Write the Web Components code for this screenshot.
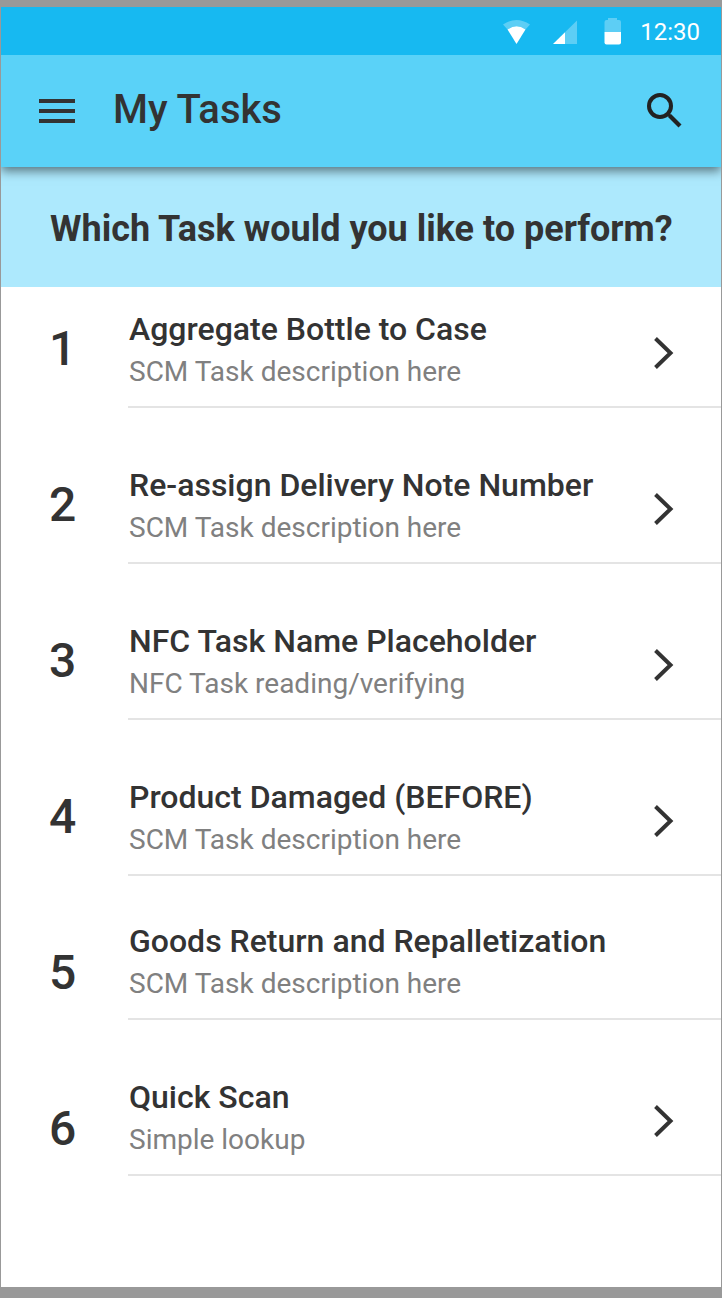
<!DOCTYPE html>
<html lang="en">
<head>
<meta charset="utf-8">
<meta name="viewport" content="width=device-width, initial-scale=1">
<title>My Tasks</title>
<style>
  body { margin: 0; background: #999; color: #333; font-family: Roboto, sans-serif; }
</style>
</head>
<body>
<task-app>
  <status-bar slot="top">12:30</status-bar>
  <app-bar slot="top">My Tasks</app-bar>
  <task-prompt>Which Task would you like to perform?</task-prompt>
  <task-list>
    <task-item number="1" arrow>Aggregate Bottle to Case<span slot="description">SCM Task description here</span></task-item>
    <task-item number="2" arrow>Re-assign Delivery Note Number<span slot="description">SCM Task description here</span></task-item>
    <task-item number="3" arrow>NFC Task Name Placeholder<span slot="description">NFC Task reading/verifying</span></task-item>
    <task-item number="4" arrow>Product Damaged (BEFORE)<span slot="description">SCM Task description here</span></task-item>
    <task-item number="5" low short>Goods Return and Repalletization<span slot="description">SCM Task description here</span></task-item>
    <task-item number="6" low arrow>Quick Scan<span slot="description">Simple lookup</span></task-item>
  </task-list>
</task-app>

<script>
const define = (name, html, setup) => {
  const template = document.createElement('template');
  template.innerHTML = html;
  customElements.define(name, class extends HTMLElement {
    constructor() {
      super();
      this.attachShadow({ mode: 'open' }).append(template.content.cloneNode(true));
    }
    connectedCallback() { if (setup) setup(this, this.shadowRoot); }
  });
};

define('task-app', `
  <style>
    :host { display: flex; flex-direction: column; box-sizing: border-box; min-height: 100vh; padding: 7px 1px 11px; }
    header { position: relative; box-shadow: 0 4px 10px rgba(0, 0, 0, .5); clip-path: inset(0 0 -20px 0); }
    main { flex: 1; background: #fff; }
  </style>
  <header><slot name="top"></slot></header>
  <main><slot></slot></main>`);

define('status-bar', `
  <style>
    :host { display: flex; align-items: center; justify-content: flex-end; box-sizing: border-box; height: 48px; padding: 2px 21px 0 0; background: #17b9f1; color: #fff; font-size: 24px; line-height: 28px; }
    svg { display: block; margin-right: 19px; }
  </style>
  <svg width="118" height="28" viewBox="0 -2 118 28" aria-hidden="true">
    <g fill="#fff" fill-opacity=".3">
      <path d="M0 4.500Q13.500 -4.500 27 4.500L22.500 9.500Q13.500 3 4.500 9.500Z"/>
      <path d="M62 12.200L74 0.500V24H62Z"/>
      <path d="M101.500 12V2Q101.500 0 103.500 0H105V-2H114V0H116Q118 0 118 2V12Z"/>
    </g>
    <g fill="#fff">
      <path d="M4.500 9.500Q13.500 3 22.500 9.500L13.500 24Z" />
      <path d="M50 24L62 12.200V24Z"/>
      <path d="M101.500 12H118V22.500Q118 24.500 116 24.500H103.500Q101.500 24.500 101.500 22.500Z"/>
    </g>
  </svg>
  <time><slot></slot></time>`);

define('app-bar', `
  <style>
    :host { display: flex; align-items: center; height: 112px; padding: 0 32px; background: #5ad2f8; }
    button { display: flex; align-items: center; justify-content: center; width: 48px; height: 48px; padding: 0; border: 0; background: none; color: #333; cursor: pointer; }
    svg { display: block; }
    h1 { flex: 1; margin: 0; padding: 0 0 2px 32px; font-size: 40px; line-height: 48px; font-weight: 500; }
  </style>
  <button type="button" aria-label="Menu">
    <svg width="36" height="24" viewBox="0 0 36 24" fill="currentColor"><path d="M0 0H36V4H0ZM0 10H36V14H0ZM0 20H36V24H0Z"/></svg>
  </button>
  <h1><slot></slot></h1>
  <button type="button" aria-label="Search">
    <svg width="36" height="36" viewBox="0 0 36 36" fill="none" stroke="#222"><circle cx="13" cy="13" r="11" stroke-width="4"/><path d="M22.500 22.500L33 33" stroke-width="4.200"/><path d="M21 21L24 24" stroke-width="3"/></svg>
  </button>`);

define('task-prompt', `
  <style>
    :host { display: block; background: #ade9fd; padding: 40px 32px 36px 49px; }
    h2 { margin: 0; font-size: 36px; line-height: 44px; font-weight: 700; }
  </style>
  <h2><slot></slot></h2>`);

define('task-list', `
  <style>
    :host { display: block; }
    ::slotted(:first-child) { --space-above: 22px; }
  </style>
  <div role="list"><slot></slot></div>`);

define('task-item', `
  <style>
    :host { display: block; }
    a { display: grid; grid-template-columns: 127px 1fr; align-items: end; padding-top: var(--space-above, 57px); color: inherit; text-decoration: none; }
    :host([short]) a { padding-top: 45px; }
    .number { padding: 0 0 31px 48px; font-size: 48px; line-height: 56px; font-weight: 500; }
    :host([low]) .number { padding-bottom: 19px; }
    .body { display: flex; align-items: end; justify-content: space-between; border-bottom: 2px solid #e4e4e4; padding: 0 37px 0 1px; }
    .title { font-size: 32px; line-height: 40px; font-weight: 500; }
    .description { font-size: 28px; line-height: 46px; color: #808080; padding-bottom: 11px; }
    svg { display: none; flex: none; margin-bottom: 33px; }
    :host([arrow]) svg { display: block; }
  </style>
  <a href="#">
    <span class="number"></span>
    <div class="body">
      <div>
        <div class="title"><slot></slot></div>
        <div class="description"><slot name="description"></slot></div>
      </div>
      <svg width="40" height="40" viewBox="0 0 40 40" fill="none" stroke="#333" stroke-width="4" aria-hidden="true"><path d="M11.500 5.500L26.500 20L11.500 34.500"/></svg>
    </div>
  </a>`, (host, root) => {
  host.setAttribute('role', 'listitem');
  root.querySelector('.number').textContent = host.getAttribute('number');
});
</script>
</body>
</html>
